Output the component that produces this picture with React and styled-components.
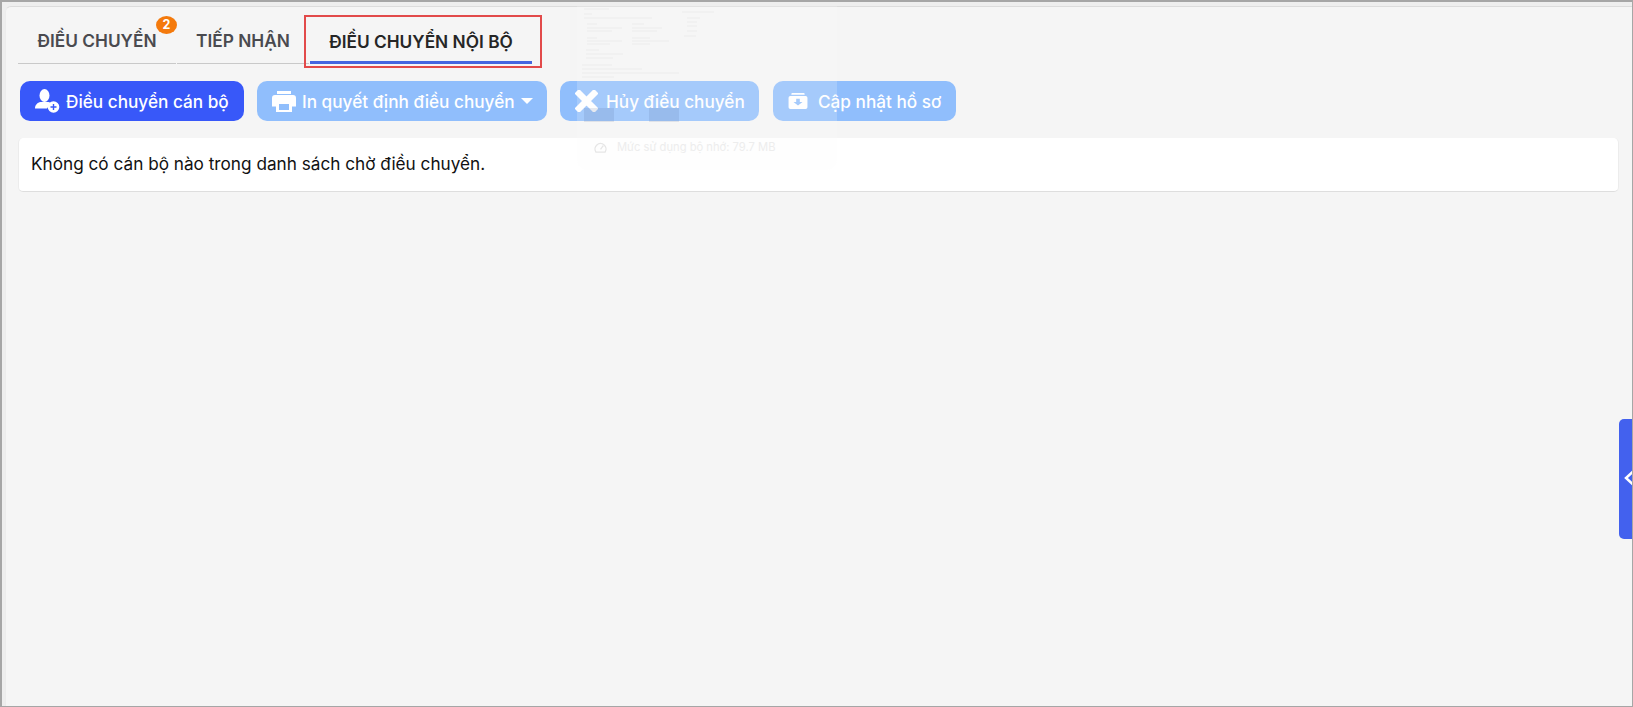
import React from "react";
import styled, { createGlobalStyle } from "styled-components";

const GlobalStyle = createGlobalStyle`
  html, body {
    margin: 0;
    padding: 0;
    height: 100%;
    overflow: hidden;
    background: #f5f5f5;
    font-family: "Inter", "Noto Sans", sans-serif;
  }
`;

const Frame = styled.div`
  position: relative;
  box-sizing: border-box;
  width: 1633px;
  height: 707px;
  overflow: hidden;
  background: #eeeeee;
  border-top: 2px solid #a6a6a6;
  border-left: 2px solid #a6a6a6;
  border-right: 1px solid #a6a6a6;
  border-bottom: 1px solid #a6a6a6;
`;

const Content = styled.div`
  box-sizing: border-box;
  height: 100%;
  margin-left: 3px;
  margin-top: 4px;
  padding: 9px 13px 0 12px;
  background: #f5f5f5;
  border-top: 1px solid #dcdcdc;
  border-left: 1px solid #ececec;
  border-top-left-radius: 6px;
`;

const Tabs = styled.div`
  display: flex;
  align-items: flex-end;
  height: 48px;
`;

const Tab = styled.div`
  position: relative;
  box-sizing: border-box;
  height: 48px;
  width: ${(p) => p.$width}px;
  margin-right: ${(p) => (p.$active ? 0 : 1)}px;
  padding-top: ${(p) => (p.$active ? 14 : 13)}px;
  text-align: center;
  font-size: 17.3px;
  line-height: 24px;
  font-weight: 600;
  white-space: nowrap;
  color: ${(p) => (p.$active ? "#262626" : "#4a4a4f")};
  border-bottom: ${(p) => (p.$active ? "3px solid #4565e0" : "1px solid #c9c9c9")};
`;

const Badge = styled.span`
  position: absolute;
  top: 0;
  right: -1px;
  width: 21px;
  height: 18px;
  border-radius: 50%;
  background: #f47a0c;
  color: #fff;
  font-size: 12.5px;
  line-height: 18px;
  font-weight: 700;
`;

const Highlight = styled.div`
  position: absolute;
  left: 302px;
  top: 13px;
  width: 238px;
  height: 53px;
  box-sizing: border-box;
  border: 2px solid #e24a4a;
`;

const Toolbar = styled.div`
  display: flex;
  margin-top: 17px;
`;

const Button = styled.div`
  box-sizing: border-box;
  display: flex;
  align-items: center;
  height: 40px;
  width: ${(p) => p.$width}px;
  margin-right: ${(p) => p.$gap}px;
  margin-left: ${(p) => (p.$first ? 2 : 0)}px;
  padding-left: 15px;
  border-radius: 10px;
  background: ${(p) => (p.$disabled ? "#90befc" : "#3858f9")};
  color: #fff;
  font-size: 17.2px;
  font-weight: 500;
  white-space: nowrap;
  svg {
    flex: none;
    display: block;
  }
`;

const Label = styled.span`
  margin-left: ${(p) => p.$gap}px;
`;

const Card = styled.div`
  box-sizing: border-box;
  height: 54px;
  margin-top: 17px;
  padding: 14px 12px;
  background: #fff;
  border-radius: 5px;
  border-bottom: 1px solid #dedede;
  border-right: 1px solid #ececec;
  border-left: 1px solid #ececec;
  font-size: 17.2px;
  line-height: 24px;
  color: #111;
`;

const SideHandle = styled.div`
  position: absolute;
  right: 0;
  top: 417px;
  width: 13px;
  height: 120px;
  overflow: hidden;
  background: #4361ee;
  border-radius: 5px 0 0 5px;
  svg {
    position: absolute;
    left: 5px;
    top: 51px;
  }
`;

const Ghost = styled.div`
  position: absolute;
  left: 575px;
  top: 4px;
  width: 260px;
  height: 164px;
  box-sizing: border-box;
  background: rgba(250, 250, 250, 0.2);
  border-radius: 0 0 10px 10px;
  pointer-events: none;
`;

const GhostMemory = styled.div`
  position: absolute;
  left: 17px;
  top: 132px;
  display: flex;
  align-items: center;
  gap: 10px;
  font-size: 11.2px;
  line-height: 18px;
  color: #ededed;
  white-space: nowrap;
`;

const GhostThumb = styled.div`
  position: absolute;
  left: ${(p) => p.$left}px;
  top: 102px;
  width: 30px;
  height: 14px;
  background: rgba(60, 80, 130, 0.12);
`;

const GhostLine = styled.div`
  position: absolute;
  left: ${(p) => p.$left}px;
  top: ${(p) => p.$top}px;
  width: ${(p) => p.$width}px;
  height: 2px;
  background: rgba(0, 0, 0, 0.02);
`;

// left, top, width of the blurred lines showing through
const ghostLines = [
  [7, 2, 25], [7, 7, 8], [7, 11, 68],
  [10, 17, 10], [10, 21, 35], [10, 24, 25],
  [55, 17, 12], [55, 21, 30], [55, 24, 25],
  [10, 31, 10], [10, 34, 35], [10, 37, 23],
  [55, 31, 18], [55, 34, 37], [55, 37, 18],
  [9, 43, 13], [9, 47, 37], [9, 51, 27],
  [5, 58, 30], [5, 62, 60], [5, 66, 97], [5, 70, 32],
  [105, 5, 32], [110, 11, 13], [110, 15, 10], [110, 19, 10], [110, 24, 10], [107, 29, 12],
];

function UserPlusIcon() {
  return (
    <svg width="25" height="24" viewBox="0 0 25 24">
      <ellipse cx="9.500" cy="6.500" rx="5" ry="6.500" fill="#fff" />
      <path d="M0 19.500c0-3.500 2.500-6 5.500-6.500h8c2 .5 3 1.500 3.500 2.500a7 7 0 0 0-5 4z" fill="#fff" />
      <circle cx="18.500" cy="18" r="5.800" fill="#fff" />
      <path d="M18.500 15v6M15.500 18h6" stroke="#3858f9" strokeWidth="1.400" />
    </svg>
  );
}

function PrintIcon() {
  return (
    <svg width="24" height="21" viewBox="0 0 24 21">
      <path d="M5 0h14v3H5z" fill="#fff" />
      <path d="M3 4h18a3 3 0 0 1 3 3v8.500h-4V11H4v4.500H0V7a3 3 0 0 1 3-3z" fill="#fff" />
      <path d="M4 11h16v10H4z M7 13v6h10v-6z" fill="#fff" fillRule="evenodd" />
    </svg>
  );
}

function CaretIcon() {
  return (
    <svg width="12" height="6" viewBox="0 0 12 6">
      <path d="M0 0h12L6 6z" fill="#fff" />
    </svg>
  );
}

function CloseIcon() {
  return (
    <svg width="23" height="22" viewBox="0 0 23 22">
      <path d="M4 3.500l15 15M19 3.500l-15 15" stroke="#fff" strokeWidth="6.500" strokeLinecap="square" />
    </svg>
  );
}

function InboxIcon() {
  return (
    <svg width="20" height="18" viewBox="0 0 22 20">
      <path
        d="M4 1h14l.5 2H3.500zM2.500 4.500h17A2 2 0 0 1 21.500 6.500V17a2 2 0 0 1-2 2h-17a2 2 0 0 1-2-2V6.500a2 2 0 0 1 2-2z"
        fill="#fff"
      />
      <path d="M9 7.500h4V11h3l-5 4-5-4h3z" fill="#90befc" />
    </svg>
  );
}

function App() {
  return (
    <Frame>
      <GlobalStyle />
      <Content>
        <Tabs>
          <Tab $width={158}>
            ĐIỀU CHUYỂN
            <Badge>2</Badge>
          </Tab>
          <Tab $width={132}>TIẾP NHẬN</Tab>
          <Tab $width={222} $active>
            ĐIỀU CHUYỂN NỘI BỘ
          </Tab>
        </Tabs>
        <Toolbar>
          <Button $width={224} $gap={13} $first>
            <UserPlusIcon />
            <Label $gap={6}>Điều chuyển cán bộ</Label>
          </Button>
          <Button $width={290} $gap={13} $disabled>
            <PrintIcon />
            <Label $gap={6}>In quyết định điều chuyển</Label>
            <Label $gap={6}>
              <CaretIcon />
            </Label>
          </Button>
          <Button $width={199} $gap={14} $disabled>
            <CloseIcon />
            <Label $gap={8}>Hủy điều chuyển</Label>
          </Button>
          <Button $width={183} $gap={0} $disabled>
            <InboxIcon />
            <Label $gap={10}>Cập nhật hồ sơ</Label>
          </Button>
        </Toolbar>
        <Card>Không có cán bộ nào trong danh sách chờ điều chuyển.</Card>
      </Content>
      <Highlight />
      <Ghost>
        {ghostLines.map(([left, top, width], i) => (
          <GhostLine key={i} $left={left} $top={top} $width={width} />
        ))}
        <GhostThumb $left={7} />
        <GhostThumb $left={72} />
        <GhostMemory>
          <svg width="13" height="11" viewBox="0 0 14 12" fill="none" stroke="#e6e6e6" strokeWidth="1.500">
            <path d="M2 11a6 6 0 1 1 10 0z" />
            <path d="M7 8l3-4" />
          </svg>
          Mức sử dụng bộ nhớ: 79.7 MB
        </GhostMemory>
      </Ghost>
      <SideHandle>
        <svg width="10" height="16" viewBox="0 0 10 16" fill="none" stroke="#fff" strokeWidth="2.500">
          <path d="M9 1.500 2 8l7 6.500" />
        </svg>
      </SideHandle>
    </Frame>
  );
}

export default App;
